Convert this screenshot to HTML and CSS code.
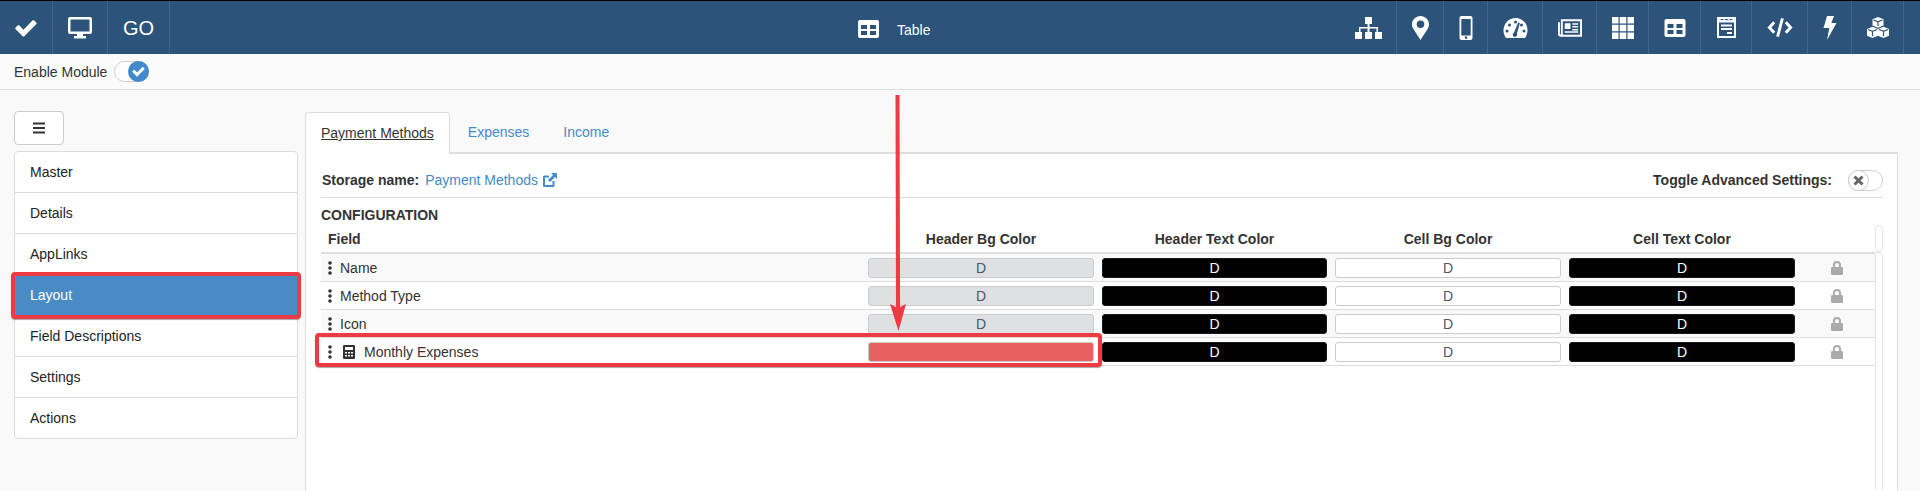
FILE: index.html
```html
<!DOCTYPE html>
<html lang="en">
<head>
    <meta charset="UTF-8">
    <meta name="viewport" content="width=device-width, initial-scale=1.0">
    <title>Table</title>
    <link rel="stylesheet" href="styles.css">
</head>
<body>
    <div class="topbar">
        <div class="nav-group">
            <a class="nav-item">
                <svg width="22" height="22" viewBox="100 200 1600 1400"><path fill="#fff" d="M1671 566q0 40-28 68l-724 724-136 136q-28 28-68 28t-68-28l-136-136-362-362q-28-28-28-68t28-68l136-136q28-28 68-28t68 28l294 295 656-657q28-28 68-28t68 28l136 136q28 28 28 68z"/></svg>
            </a>
            <a class="nav-item">
                <svg width="24" height="22" viewBox="0 0 24 22"><path fill="#fff" fill-rule="evenodd" d="M2 0h20a2 2 0 0 1 2 2v13a2 2 0 0 1-2 2h-7v2h3v2.500H6V19h3v-2H2a2 2 0 0 1-2-2V2a2 2 0 0 1 2-2zM2.500 2.500v12h19v-12z"/></svg>
            </a>
            <a class="nav-item nav-go">GO</a>
        </div>
        <div class="nav-title">
            <svg width="21" height="18" viewBox="0 0 21 18"><path fill="#fff" fill-rule="evenodd" d="M2 0h17a2 2 0 0 1 2 2v14a2 2 0 0 1-2 2H2a2 2 0 0 1-2-2V2a2 2 0 0 1 2-2zM3 5v4h6V5zm9 0v4h6V5zM3 11v4h6v-4zm9 0v4h6v-4z"/></svg>
            <span class="nav-title-text">Table</span>
        </div>
        <div class="nav-group nav-right">
            <a class="nav-item">
                <svg width="27" height="22" viewBox="0 0 27 22"><path fill="#fff" d="M10 0h7v7h-2.500v3H23v5h-1.500v-3.500h-7V15h-2v-3.500h-7V15H4v-5h8.500V7H10zM0 15h7v7H0zM10 15h7v7h-7zM20 15h7v7h-7z"/></svg>
            </a>
            <a class="nav-item">
                <svg width="17" height="24" viewBox="0 0 17 24"><path fill="#fff" fill-rule="evenodd" d="M8.500 0C13.200 0 17 3.700 17 8.300c0 2-.6 3.300-1.400 4.800L8.500 24 1.400 13.100C.6 11.600 0 10.300 0 8.300 0 3.700 3.800 0 8.500 0zm0 4.500a3.800 3.800 0 1 0 0 7.600 3.800 3.800 0 0 0 0-7.600z"/></svg>
            </a>
            <a class="nav-item">
                <svg width="14" height="24" viewBox="0 0 13 24"><path fill="#fff" fill-rule="evenodd" d="M2 0h9a2 2 0 0 1 2 2v20a2 2 0 0 1-2 2H2a2 2 0 0 1-2-2V2a2 2 0 0 1 2-2zM1.800 3v16.500h9.400V3zM6.500 20.300a1.300 1.300 0 1 0 0 2.600 1.300 1.300 0 0 0 0-2.600z"/></svg>
            </a>
            <a class="nav-item">
                <svg width="25" height="20" viewBox="0 0 24 20"><path fill="#fff" d="M12 0C5.400 0 0 5.500 0 12.200c0 2.800.9 5.500 2.500 7.800h19c1.600-2.300 2.500-5 2.500-7.800C24 5.500 18.600 0 12 0z"/><g fill="#2c5379"><circle cx="3.500" cy="13" r="1.500"/><circle cx="6" cy="7" r="1.500"/><circle cx="12" cy="4" r="1.500"/><circle cx="20.500" cy="13" r="1.500"/><circle cx="18" cy="7" r="1.500"/><path d="M14.800 4.500l1.600.6-3 10.500a2.200 2.200 0 1 1-3-.9z"/></g></svg>
            </a>
            <a class="nav-item">
                <svg width="24" height="18" viewBox="0 0 25 18"><path fill="#fff" fill-rule="evenodd" d="M3 0h22v18H2.500A2.500 2.500 0 0 1 0 15.500V3h2v12.500a.6.6 0 0 0 1 0zM5 2v14h18V2zM7 4h6v6H7zM15 4h6v1.500h-6zM15 7h6v1.500h-6zM15 10h6v1.500h-6zM7 12.500h14V14H7z"/></svg>
            </a>
            <a class="nav-item">
                <svg width="22" height="22" viewBox="0 0 22 22"><path fill="#fff" d="M0 0h6.500v6.500H0zM7.700 0h6.600v6.500H7.700zM15.500 0H22v6.500h-6.500zM0 7.700h6.500v6.600H0zM7.700 7.700h6.600v6.600H7.700zM15.500 7.700H22v6.600h-6.500zM0 15.500h6.500V22H0zM7.700 15.500h6.600V22H7.700zM15.500 15.500H22V22h-6.500z"/></svg>
            </a>
            <a class="nav-item">
                <svg width="22" height="18" viewBox="0 0 21 18"><path fill="#fff" fill-rule="evenodd" d="M2 0h17a2 2 0 0 1 2 2v14a2 2 0 0 1-2 2H2a2 2 0 0 1-2-2V2a2 2 0 0 1 2-2zM3 5v4h6V5zm9 0v4h6V5zM3 11v4h6v-4zm9 0v4h6v-4z"/></svg>
            </a>
            <a class="nav-item">
                <svg width="21" height="21" viewBox="0 0 19 21"><path fill="#fff" fill-rule="evenodd" d="M0 0h19v21H0zM2 5.500V19h15V5.500zM4 7.500h11v2H4zM4 11h11v2H4zM10 15h5v2h-5zM3 2l2 1.500L7 2l2.500 1.500L12 2l2 1.500L16 2z"/></svg>
            </a>
            <a class="nav-item">
                <svg width="26" height="21" viewBox="0 0 27 21"><path fill="none" stroke="#fff" stroke-width="3" d="M7.500 5L2.500 10.500 7.500 16M19.500 5l5 5.500-5 5.500M16 1l-5 19"/></svg>
            </a>
            <a class="nav-item">
                <svg width="14" height="24" viewBox="0 0 13 24"><path fill="#fff" d="M3.500 0h7L7.800 7H13L3.500 24l2.300-12H0z"/></svg>
            </a>
            <a class="nav-item">
                <svg width="22" height="22" viewBox="0 0 22 22"><path fill="#fff" d="M11 0l5.500 2.200v6.300L11 10.800 5.500 8.500V2.200zM5.500 9.700l5.500 2.300v6.700L5.500 21 0 18.700V12zM16.500 9.700L22 12v6.700L16.500 21 11 18.700V12z"/><path fill="none" stroke="#2c5379" stroke-width="1.200" d="M6.500 3L11 4.800 15.500 3M11 4.800V9M1 12.500l4.500 1.800 4.500-1.800M5.500 14.300v5M12 12.500l4.500 1.800 4.500-1.800M16.500 14.300v5"/></svg>
            </a>
        </div>
    </div>

    <div class="subbar">
        <span>Enable Module</span>
        <span class="switch switch-on">
            <span class="knob">
                <svg width="13" height="11" viewBox="100 200 1600 1400"><path fill="#fff" d="M1671 566q0 40-28 68l-724 724-136 136q-28 28-68 28t-68-28l-136-136-362-362q-28-28-28-68t28-68l136-136q28-28 68-28t68 28l294 295 656-657q28-28 68-28t68 28l136 136q28 28 28 68z"/></svg>
            </span>
        </span>
    </div>

    <div class="main">
        <div class="sidebar">
            <button class="menu-btn">
                <span class="menu-lines"></span>
            </button>
            <div class="side-list">
                <div class="side-item">Master</div>
                <div class="side-item">Details</div>
                <div class="side-item">AppLinks</div>
                <div class="side-item active">Layout</div>
                <div class="side-item">Field Descriptions</div>
                <div class="side-item">Settings</div>
                <div class="side-item">Actions</div>
            </div>
        </div>

        <div class="content">
            <div class="tabs">
                <a class="tab active"><span>Payment Methods</span></a>
                <a class="tab">Expenses</a>
                <a class="tab tab-last">Income</a>
            </div>
            <div class="panel">
                <div class="storage-row">
                    <div>
                        <strong class="storage-label">Storage name:</strong>
                        <a class="link">Payment Methods</a>
                        <svg class="ext-icon" width="14" height="14" viewBox="0 0 14 14"><path fill="none" stroke="#428bca" stroke-width="2" d="M10.500 8v4.500a.5.500 0 0 1-.5.500H1.500a.5.500 0 0 1-.5-.5V4a.5.500 0 0 1 .5-.5H6"/><path fill="#428bca" d="M8 0h6v6l-2-2-5 5-2-2 5-5z"/></svg>
                    </div>
                    <div class="advanced">
                        <strong>Toggle Advanced Settings:</strong>
                        <span class="switch switch-off">
                            <span class="knob">
                                <svg width="11" height="11" viewBox="0 0 11 11"><path fill="none" stroke="#666" stroke-width="3" d="M1.500 1.500l8 8M9.500 1.500l-8 8"/></svg>
                            </span>
                        </span>
                    </div>
                </div>

                <h4 class="section-title">CONFIGURATION</h4>

                <div class="table-wrap">
                    <table class="field-table">
                        <colgroup>
                            <col class="col-field">
                            <col class="col-color">
                            <col class="col-color-narrow">
                            <col class="col-color">
                            <col class="col-color">
                            <col class="col-lock">
                        </colgroup>
                        <thead>
                            <tr>
                                <th class="th-field">Field</th>
                                <th>Header Bg Color</th>
                                <th>Header Text Color</th>
                                <th>Cell Bg Color</th>
                                <th>Cell Text Color</th>
                                <th></th>
                            </tr>
                        </thead>
                        <tbody>
                            <tr>
                                <td><div class="field-name"><svg class="dots" width="4" height="14" viewBox="0 0 4 14"><circle cx="2" cy="2" r="1.800"/><circle cx="2" cy="7" r="1.800"/><circle cx="2" cy="12" r="1.800"/></svg>Name</div></td>
                                <td><div class="swatch swatch-grey">D</div></td>
                                <td><div class="swatch swatch-black">D</div></td>
                                <td><div class="swatch swatch-white">D</div></td>
                                <td><div class="swatch swatch-black">D</div></td>
                                <td class="lock-cell"><svg width="12" height="14" viewBox="0 0 12 14"><path fill="#aaa" fill-rule="evenodd" d="M6 0a4 4 0 0 1 4 4v2h1a1 1 0 0 1 1 1v6a1 1 0 0 1-1 1H1a1 1 0 0 1-1-1V7a1 1 0 0 1 1-1h1V4a4 4 0 0 1 4-4zm0 2a2 2 0 0 0-2 2v2h4V4a2 2 0 0 0-2-2z"/></svg></td>
                            </tr>
                            <tr>
                                <td><div class="field-name"><svg class="dots" width="4" height="14" viewBox="0 0 4 14"><circle cx="2" cy="2" r="1.800"/><circle cx="2" cy="7" r="1.800"/><circle cx="2" cy="12" r="1.800"/></svg>Method Type</div></td>
                                <td><div class="swatch swatch-grey">D</div></td>
                                <td><div class="swatch swatch-black">D</div></td>
                                <td><div class="swatch swatch-white">D</div></td>
                                <td><div class="swatch swatch-black">D</div></td>
                                <td class="lock-cell"><svg width="12" height="14" viewBox="0 0 12 14"><path fill="#aaa" fill-rule="evenodd" d="M6 0a4 4 0 0 1 4 4v2h1a1 1 0 0 1 1 1v6a1 1 0 0 1-1 1H1a1 1 0 0 1-1-1V7a1 1 0 0 1 1-1h1V4a4 4 0 0 1 4-4zm0 2a2 2 0 0 0-2 2v2h4V4a2 2 0 0 0-2-2z"/></svg></td>
                            </tr>
                            <tr>
                                <td><div class="field-name"><svg class="dots" width="4" height="14" viewBox="0 0 4 14"><circle cx="2" cy="2" r="1.800"/><circle cx="2" cy="7" r="1.800"/><circle cx="2" cy="12" r="1.800"/></svg>Icon</div></td>
                                <td><div class="swatch swatch-grey">D</div></td>
                                <td><div class="swatch swatch-black">D</div></td>
                                <td><div class="swatch swatch-white">D</div></td>
                                <td><div class="swatch swatch-black">D</div></td>
                                <td class="lock-cell"><svg width="12" height="14" viewBox="0 0 12 14"><path fill="#aaa" fill-rule="evenodd" d="M6 0a4 4 0 0 1 4 4v2h1a1 1 0 0 1 1 1v6a1 1 0 0 1-1 1H1a1 1 0 0 1-1-1V7a1 1 0 0 1 1-1h1V4a4 4 0 0 1 4-4zm0 2a2 2 0 0 0-2 2v2h4V4a2 2 0 0 0-2-2z"/></svg></td>
                            </tr>
                            <tr>
                                <td><div class="field-name"><svg class="dots" width="4" height="14" viewBox="0 0 4 14"><circle cx="2" cy="2" r="1.800"/><circle cx="2" cy="7" r="1.800"/><circle cx="2" cy="12" r="1.800"/></svg><svg class="calc" width="12" height="14" viewBox="0 0 12 14"><path fill="#333" fill-rule="evenodd" d="M1 0h10a1 1 0 0 1 1 1v12a1 1 0 0 1-1 1H1a1 1 0 0 1-1-1V1a1 1 0 0 1 1-1zM2 2v3h8V2zM2 7v1.500h2V7zm3 0v1.500h2V7zm3 0v1.500h2V7zM2 10v1.500h2V10zm3 0v1.500h2V10zm3 0v1.500h2V10z"/></svg>Monthly Expenses</div></td>
                                <td><div class="swatch swatch-red"></div></td>
                                <td><div class="swatch swatch-black">D</div></td>
                                <td><div class="swatch swatch-white">D</div></td>
                                <td><div class="swatch swatch-black">D</div></td>
                                <td class="lock-cell"><svg width="12" height="14" viewBox="0 0 12 14"><path fill="#aaa" fill-rule="evenodd" d="M6 0a4 4 0 0 1 4 4v2h1a1 1 0 0 1 1 1v6a1 1 0 0 1-1 1H1a1 1 0 0 1-1-1V7a1 1 0 0 1 1-1h1V4a4 4 0 0 1 4-4zm0 2a2 2 0 0 0-2 2v2h4V4a2 2 0 0 0-2-2z"/></svg></td>
                            </tr>
                        </tbody>
                    </table>
                    <div class="scroll-col">
                        <div class="scroll-head"></div>
                        <div class="scroll-body"></div>
                    </div>
                </div>
            </div>
        </div>
    </div>

    <!-- annotations drawn over the screenshot -->
    <div class="mark mark-layout"></div>
    <div class="mark mark-row"></div>
    <svg class="arrow" width="16" height="236" viewBox="0 0 16 236">
        <path fill="#ee3a43" d="M5.500 0h4l.6 212L16 209l-7.500 27L0 209l6 3z"/>
    </svg>
</body>
</html>
```

FILE: styles.css
```css
html, body {
    height: 100%;
    overflow: hidden;
}
body {
    font-family: "Liberation Sans", Arial, sans-serif;
    font-size: 14px;
    line-height: 20px;
    margin: 0;
    padding: 0;
    background-color: #f9f9f9;
    color: #333;
    position: relative;
}
a {
    cursor: pointer;
}

/* top bar */
.topbar {
    height: 53px;
    border-top: 1px solid #000;
    background-color: #2c5379;
    display: flex;
    justify-content: space-between;
    position: relative;
}
.nav-group {
    display: flex;
}
.nav-right {
    padding-right: 16px;
}
.nav-item {
    display: flex;
    align-items: center;
    padding: 0 15px;
    border-right: 1px solid #41658a;
    color: #fff;
}
.nav-right .nav-item {
    padding: 0 14.500px;
}
.nav-go {
    font-size: 20px;
}
.nav-title {
    position: absolute;
    left: 858px;
    top: 16px;
    display: flex;
    align-items: center;
    gap: 18px;
    color: #fff;
}
.nav-title-text {
    margin-top: 3px;
}

/* enable module bar */
.subbar {
    height: 35px;
    border-bottom: 1px solid #ddd;
    background-color: #fbfbfb;
    padding-left: 14px;
    display: flex;
    align-items: center;
    gap: 7px;
}
.switch {
    display: inline-flex;
    width: 33px;
    height: 19px;
    border: 1px solid #ccc;
    border-radius: 11px;
    background: #fff;
}
.switch-on {
    justify-content: flex-end;
}
.knob {
    width: 21px;
    height: 21px;
    margin: -1px;
    border-radius: 50%;
    display: flex;
    align-items: center;
    justify-content: center;
}
.switch-on .knob {
    background-color: #428bca;
}
.switch-off .knob {
    background-color: #fff;
    border: 1px solid #ccc;
    box-sizing: border-box;
}

/* left menu */
.main {
    display: flex;
    padding: 21px 22px 0 14px;
    gap: 7px;
}
.sidebar {
    width: 284px;
    flex-shrink: 0;
}
.menu-btn {
    display: flex;
    align-items: center;
    justify-content: center;
    width: 50px;
    height: 34px;
    padding: 0;
    background: #fff;
    border: 1px solid #ccc;
    border-radius: 4px;
    margin-bottom: 6px;
}
.menu-lines {
    width: 12px;
    height: 2px;
    background: #333;
    box-shadow: 0 -4.500px 0 #333, 0 4.500px 0 #333;
}
.side-list {
    background: #fff;
    border: 1px solid #ddd;
    border-radius: 4px;
}
.side-item {
    height: 20px;
    padding: 10px 15px;
    border-bottom: 1px solid #ddd;
    color: #222;
}
.side-item:last-child {
    border-bottom: none;
}
.side-item.active {
    background-color: #498bc5;
    color: #fff;
}

/* tabs and panel */
.content {
    flex: 1;
    padding-top: 1px;
    min-width: 0;
}
.tabs {
    display: flex;
    gap: 3px;
    height: 40px;
}
.tab {
    padding: 10px 15px;
    color: #428bca;
    height: 20px;
}
.tab-last {
    margin-left: 1px;
}
.tab.active {
    color: #333;
    background: #fff;
    border: 1px solid #ddd;
    border-bottom: none;
    border-radius: 4px 4px 0 0;
    padding: 10px 15px 10px 15px;
    height: 21px;
    position: relative;
    z-index: 1;
}
.tab.active span {
    text-decoration: underline;
}
.panel {
    background: #fff;
    border: 1px solid #ddd;
    border-top-width: 2px;
    border-bottom: none;
    height: 337px;
    padding: 0 14px 0 15px;
    overflow: hidden;
}
.storage-row {
    display: flex;
    justify-content: space-between;
    align-items: center;
    height: 34px;
    padding-top: 9px;
    border-bottom: 1px solid #ddd;
}
.storage-label {
    margin-left: 1px;
    margin-right: 2px;
}
.link {
    color: #428bca;
}
.ext-icon {
    vertical-align: -2px;
    margin-left: 1px;
}
.advanced {
    display: flex;
    align-items: center;
    gap: 16px;
}
.section-title {
    margin: 7px 0 0;
    font-size: 14px;
    line-height: 20px;
    font-weight: bold;
}

/* field table */
.table-wrap {
    display: flex;
    align-items: flex-start;
}
.field-table {
    width: 1554px;
    table-layout: fixed;
    border-collapse: collapse;
    flex-shrink: 0;
}
.col-field {
    width: 543px;
}
.col-color {
    width: 234px;
}
.col-color-narrow {
    width: 233px;
}
.col-lock {
    width: 76px;
}
.field-table th {
    height: 27px;
    padding: 0;
    text-align: center;
    font-size: 14px;
    border-bottom: 2px solid #ddd;
    vertical-align: middle;
}
.field-table th.th-field {
    text-align: left;
    padding-left: 7px;
}
.field-table td {
    height: 27px;
    padding: 0 4px;
    border-bottom: 1px solid #ddd;
    vertical-align: middle;
}
.field-table tbody tr:nth-child(odd) {
    background-color: #f9f9f9;
}
.field-name {
    display: flex;
    align-items: center;
    padding-left: 3px;
}
.dots {
    fill: #333;
    margin-right: 8px;
}
.calc {
    margin: 0 9px 0 3px;
}
.swatch {
    box-sizing: border-box;
    height: 20px;
    line-height: 18px;
    border: 1px solid #ccc;
    border-radius: 3px;
    text-align: center;
    margin-top: 1px;
}
.swatch-grey {
    background-color: #dfe0e1;
    color: #46596a;
}
.swatch-black {
    background-color: #000;
    border-color: #1a1a1a;
    color: #fff;
}
.swatch-white {
    background-color: #fff;
    color: #46596a;
}
.swatch-red {
    background-color: #e86060;
}
.lock-cell {
    text-align: center;
    line-height: 14px;
}
.lock-cell svg {
    vertical-align: middle;
}
.scroll-col {
    width: 8px;
    display: flex;
    flex-direction: column;
}
.scroll-head {
    height: 27px;
    flex-shrink: 0;
    box-sizing: border-box;
    border: 1px solid #e3e3e3;
    border-radius: 4px;
}
.scroll-body {
    height: 238px;
    box-sizing: border-box;
    border: 1px solid #e3e3e3;
    border-bottom: none;
    border-radius: 4px 4px 0 0;
}

/* red annotation marks */
.mark {
    position: absolute;
    box-sizing: border-box;
    border: 4px solid #ee3a43;
    border-radius: 4px;
    box-shadow: 0 1px 1px rgba(0, 0, 0, 0.35);
}
.mark-layout {
    left: 11px;
    top: 272px;
    width: 290px;
    height: 47px;
}
.mark-row {
    left: 315px;
    top: 333px;
    width: 787px;
    height: 34px;
}
.arrow {
    position: absolute;
    left: 890px;
    top: 95px;
}
```
